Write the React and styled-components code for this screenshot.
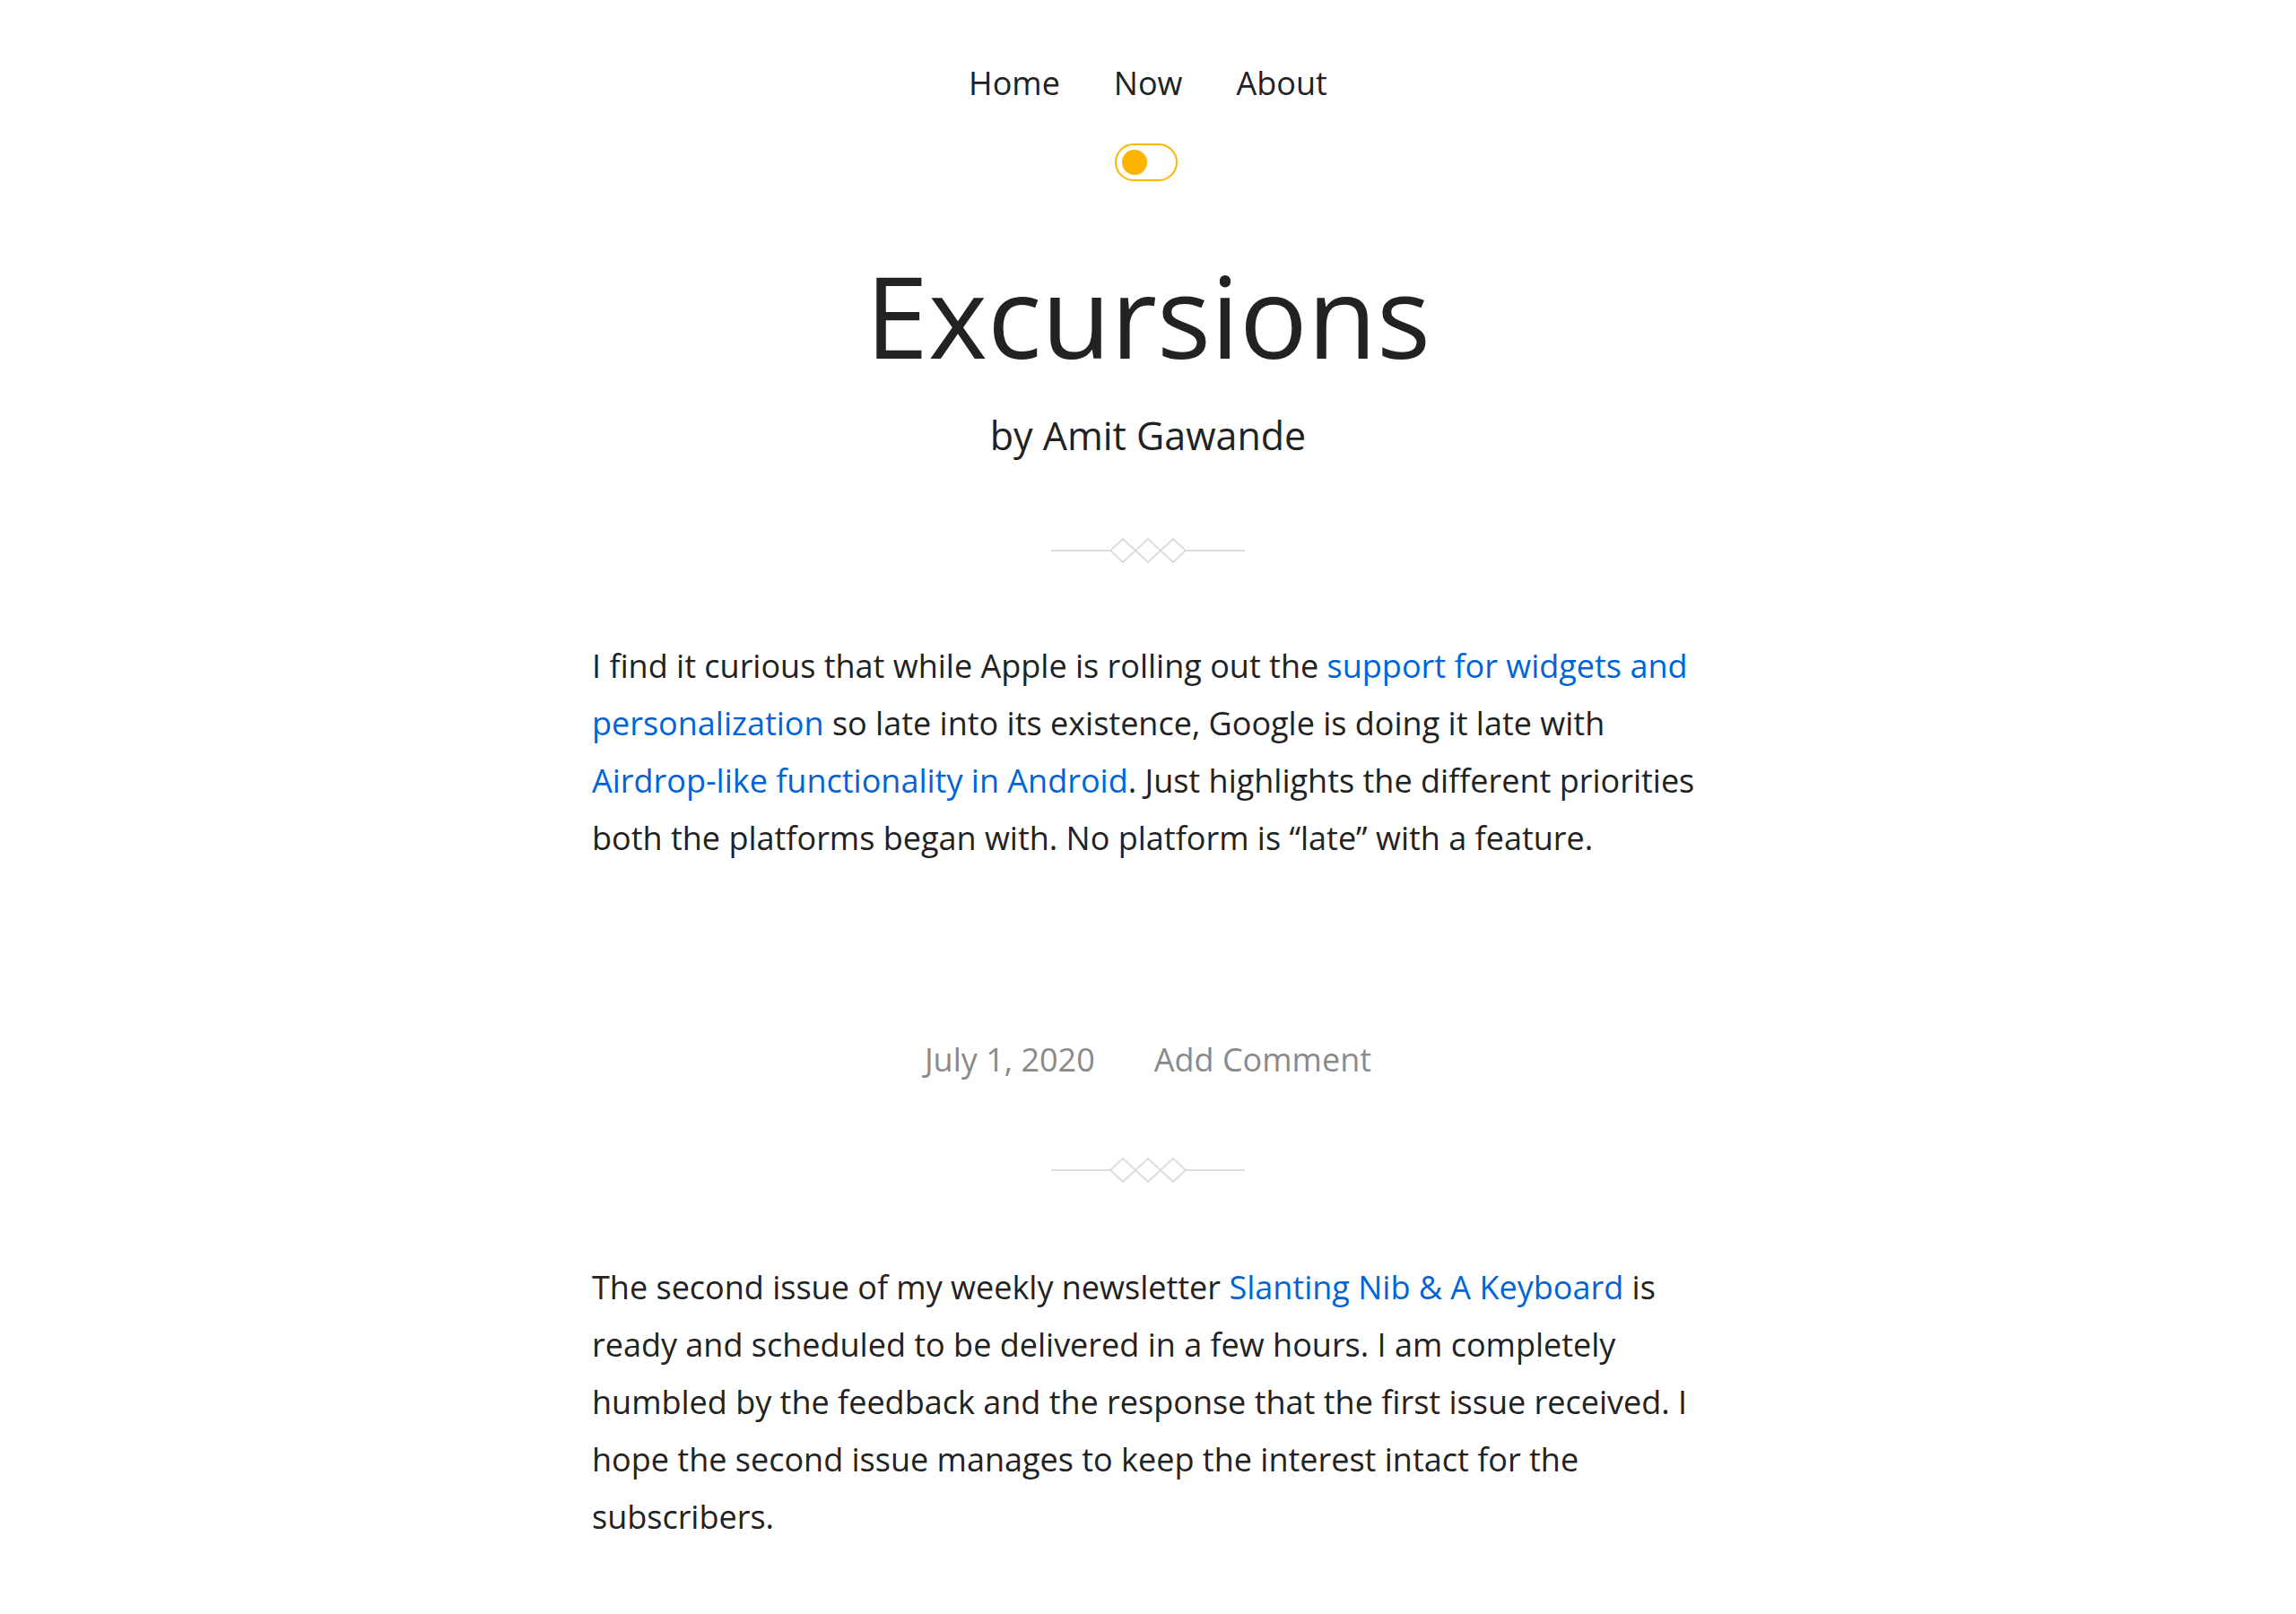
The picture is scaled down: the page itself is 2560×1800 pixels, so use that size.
import React, { useState } from "react";
import styled, { createGlobalStyle } from "styled-components";

const GlobalStyle = createGlobalStyle`
  html, body {
    margin: 0;
    padding: 0;
    background: #ffffff;
  }
  body {
    font-family: "Open Sans", "Noto Sans", "Liberation Sans", sans-serif;
    color: #222222;
    -webkit-font-smoothing: antialiased;
  }
  * { box-sizing: border-box; }
`;

const Page = styled.div`
  display: flex;
  flex-direction: column;
  align-items: center;
  padding-bottom: 120px;
`;

const Header = styled.header`
  display: flex;
  flex-direction: column;
  align-items: center;
  padding-top: 75px;
`;

const Nav = styled.nav`
  display: flex;
  gap: 60px;
`;

const NavLink = styled.a`
  font-size: 36px;
  line-height: 36px;
  color: #222222;
  text-decoration: none;
`;

const Toggle = styled.button`
  margin: 49px 5px 0 0;
  width: 70px;
  height: 42px;
  padding: 0 0 0 6px;
  border: 2px solid #ffb400;
  border-radius: 21px;
  background: transparent;
  display: flex;
  align-items: center;
  justify-content: ${(p) => (p.$on ? "flex-end" : "flex-start")};
  cursor: pointer;
`;

const Knob = styled.span`
  width: 28px;
  height: 28px;
  border-radius: 50%;
  background: #ffb400;
`;

const Title = styled.h1`
  margin: 86px 0 0;
  font-size: 126px;
  line-height: 126px;
  font-weight: 400;
  color: #222222;
`;

const Byline = styled.p`
  margin: 50px 0 0;
  font-size: 43px;
  line-height: 43px;
  color: #222222;
`;

const DividerWrap = styled.div`
  margin-top: ${(p) => p.$top}px;
  width: 216px;
  height: 28px;
  display: flex;
`;

const Post = styled.article`
  width: 1240px;
  display: flex;
  flex-direction: column;
  align-items: center;
`;

const Body = styled.p`
  align-self: stretch;
  margin: ${(p) => p.$top}px 0 0;
  font-size: 36px;
  line-height: 64px;
  color: #222222;
`;

const Link = styled.a`
  color: #0064d9;
  text-decoration: none;
`;

const Meta = styled.div`
  margin-top: 183px;
  display: flex;
  gap: 66px;
  font-size: 36px;
  line-height: 64px;
  color: #8a8a8a;
`;

const MetaLink = styled.a`
  color: #8a8a8a;
  text-decoration: none;
`;

function Divider({ top }) {
  return (
    <DividerWrap $top={top}>
      <svg width="216" height="28" viewBox="0 0 216 28" fill="none">
        <g stroke="#dddddd" strokeWidth="2">
          <line x1="0" y1="14" x2="66" y2="14" />
          <path d="M66 14 L80 1 L94 14 L80 27 Z" />
          <path d="M94 14 L108 1 L122 14 L108 27 Z" />
          <path d="M122 14 L136 1 L150 14 L136 27 Z" />
          <line x1="150" y1="14" x2="216" y2="14" />
        </g>
      </svg>
    </DividerWrap>
  );
}

export default function App() {
  const [dark, setDark] = useState(false);
  return (
    <>
      <GlobalStyle />
      <Page>
        <Header>
          <Nav>
            <NavLink href="#">Home</NavLink>
            <NavLink href="#">Now</NavLink>
            <NavLink href="#">About</NavLink>
          </Nav>
          <Toggle $on={dark} onClick={() => setDark(!dark)} aria-label="Toggle theme">
            <Knob />
          </Toggle>
          <Title>Excursions</Title>
          <Byline>by Amit Gawande</Byline>
        </Header>

        <Divider top={93} />

        <Post>
          <Body $top={83}>
            I find it curious that while Apple is rolling out the{" "}
            <Link href="#">support for widgets and personalization</Link> so late
            into its existence, Google is doing it late with{" "}
            <Link href="#">Airdrop-like functionality in Android</Link>. Just
            highlights the different priorities both the platforms began with. No
            platform is “late” with a feature.
          </Body>
          <Meta>
            <MetaLink href="#">July 1, 2020</MetaLink>
            <MetaLink href="#">Add Comment</MetaLink>
          </Meta>
        </Post>

        <Divider top={77} />

        <Post>
          <Body $top={85}>
            The second issue of my weekly newsletter{" "}
            <Link href="#">Slanting Nib &amp; A Keyboard</Link> is ready and
            scheduled to be delivered in a few hours. I am completely humbled by
            the feedback and the response that the first issue received. I hope
            the second issue manages to keep the interest intact for the
            subscribers.
          </Body>
        </Post>
      </Page>
    </>
  );
}
